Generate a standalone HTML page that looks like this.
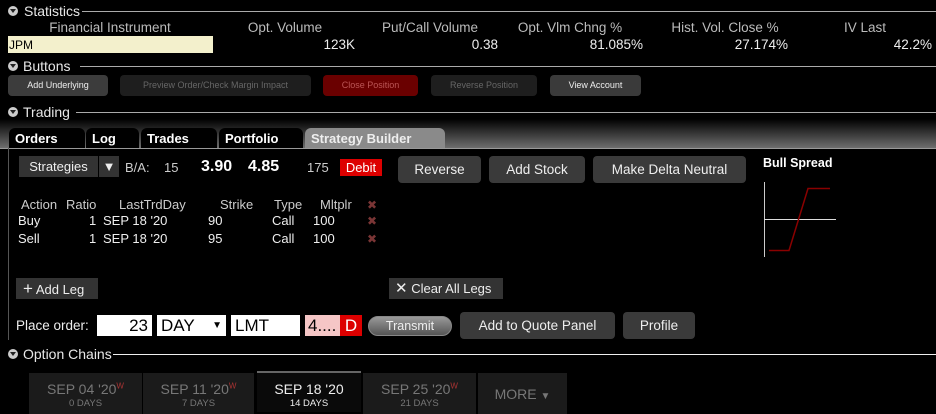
<!DOCTYPE html>
<html><head><meta charset="utf-8"><style>
*{margin:0;padding:0;box-sizing:border-box}
body{width:936px;height:414px;background:#000;color:#ddd;font-family:"Liberation Sans",sans-serif;font-size:13px;position:relative;overflow:hidden}
.a{position:absolute;white-space:nowrap}
.hd{font-size:14px;color:#e8e8e8}
.dot{position:absolute;width:10px;height:10px;border-radius:50%;background:#ccc}
.dot:after{content:"";position:absolute;left:2px;top:3px;border-left:3px solid transparent;border-right:3px solid transparent;border-top:4px solid #222}
.ln{position:absolute;height:1px;background:#aaa}
.col{color:#bbb;font-size:13.5px;text-align:center}
.val{color:#eee;font-size:13.5px;text-align:right}
.b1{position:absolute;height:21px;border-radius:4px;font-size:9px;text-align:center;line-height:21px}
.b2{position:absolute;background:#3a3a3a;border-radius:4px;color:#eee;font-size:13.5px;text-align:center}
.tab{position:absolute;top:128px;height:20px;background:#000;border-radius:6px 6px 0 0;color:#fff;font-weight:bold;font-size:13px;padding:3px 0 0 6px}
.x{color:#7a3535;font-size:12px}
.inp{position:absolute;top:315px;height:21px;background:#fff;color:#000;font-size:17px;line-height:21px}
.et{position:absolute;top:373px;height:41px;background:#1b1b1b;text-align:center;color:#777;font-size:14px;padding-top:8px}
.et small{display:block;font-size:9.5px;margin-top:1px}
.et sup{color:#a33;font-size:8px}
</style></head><body>
<div class="a" style="left:0;right:0;top:119px;height:29px;background:linear-gradient(#000,#6e6e6e)"></div>
<div class="dot" style="left:8px;top:6px"></div><div class="a hd" style="left:24px;top:3px">Statistics</div><div class="ln" style="left:82px;right:0;top:11px"></div>
<div class="a col" style="left:30px;width:160px;top:20px">Financial Instrument</div>
<div class="a col" style="left:230px;width:110px;top:20px">Opt. Volume</div>
<div class="a col" style="left:370px;width:120px;top:20px">Put/Call Volume</div>
<div class="a col" style="left:510px;width:120px;top:20px">Opt. Vlm Chng %</div>
<div class="a col" style="left:660px;width:130px;top:20px">Hist. Vol. Close %</div>
<div class="a col" style="left:830px;width:70px;top:20px">IV Last</div>
<div class="a" style="left:8px;top:36px;width:205px;height:17px;background:#f3f0cc;color:#000;font-size:12px;padding:2px 1px">JPM</div>
<div class="a val" style="right:581px;top:37px">123K</div>
<div class="a val" style="right:438px;top:37px">0.38</div>
<div class="a val" style="right:293px;top:37px">81.085%</div>
<div class="a val" style="right:148px;top:37px">27.174%</div>
<div class="a val" style="right:4px;top:37px">42.2%</div>
<div class="dot" style="left:8px;top:61px"></div><div class="a hd" style="left:23px;top:58px">Buttons</div><div class="ln" style="left:80px;right:0;top:66px"></div>
<div class="b1" style="left:8px;width:100px;top:75px;background:#3c3c3c;color:#eee">Add Underlying</div>
<div class="b1" style="left:120px;width:191px;top:75px;background:#1e1e1e;color:#666">Preview Order/Check Margin Impact</div>
<div class="b1" style="left:323px;width:95px;top:75px;background:#6a0000;color:#b55">Close Position</div>
<div class="b1" style="left:431px;width:106px;top:75px;background:#1e1e1e;color:#666">Reverse Position</div>
<div class="b1" style="left:550px;width:91px;top:75px;background:#3a3a3a;color:#eee">View Account</div>
<div class="dot" style="left:8px;top:107px"></div><div class="a hd" style="left:23px;top:104px">Trading</div><div class="ln" style="left:76px;right:0;top:112px"></div>
<div class="tab" style="left:9px;width:76px">Orders</div>
<div class="tab" style="left:86px;width:53px">Log</div>
<div class="tab" style="left:141px;width:76px">Trades</div>
<div class="tab" style="left:219px;width:84px">Portfolio</div>
<div class="tab" style="left:305px;width:140px;background:#8a8a8a;color:#eee">Strategy Builder</div>
<div class="a" style="left:0;right:0;top:148px;height:1px;background:#999"></div>
<div class="a" style="left:8px;top:148px;width:1px;height:192px;background:#555"></div>
<div class="a" style="left:19px;top:156px;width:79px;height:21px;background:#333;color:#eee;font-size:13px;text-align:center;line-height:21px">Strategies</div>
<div class="a" style="left:99px;top:156px;width:20px;height:21px;background:#333;color:#eee;font-size:13px;text-align:center;line-height:21px">▼</div>
<div class="a" style="left:125px;top:160px;color:#ccc;font-size:13px">B/A:</div>
<div class="a" style="left:164px;top:160px;color:#ccc;font-size:13px">15</div>
<div class="a" style="left:201px;top:158px;color:#fff;font-size:16px;font-weight:bold">3.90</div>
<div class="a" style="left:248px;top:158px;color:#fff;font-size:16px;font-weight:bold">4.85</div>
<div class="a" style="left:307px;top:160px;color:#ccc;font-size:13px">175</div>
<div class="a" style="left:340px;top:159px;width:42px;height:17px;background:#d00;color:#fff;font-size:13px;text-align:center;line-height:17px">Debit</div>
<div class="b2" style="left:398px;width:83px;top:156px;height:27px;line-height:27px">Reverse</div>
<div class="b2" style="left:489px;width:96px;top:156px;height:27px;line-height:27px">Add Stock</div>
<div class="b2" style="left:593px;width:153px;top:156px;height:27px;line-height:27px">Make Delta Neutral</div>
<div class="a" style="left:763px;top:156px;color:#fff;font-weight:bold;font-size:12.5px">Bull Spread</div>
<svg class="a" style="left:0;top:0" width="936" height="414"><line x1="764.5" y1="182" x2="764.5" y2="257" stroke="#ccc"/><line x1="764" y1="219.5" x2="836" y2="219.5" stroke="#ddd"/><polyline points="769,250.5 789,250.5 808,188.5 830,188.5" fill="none" stroke="#8a0000" stroke-width="1.5"/></svg>
<div class="a" style="left:21px;top:197px;color:#ccc">Action</div>
<div class="a" style="left:66px;top:197px;color:#ccc">Ratio</div>
<div class="a" style="left:119px;top:197px;color:#ccc">LastTrdDay</div>
<div class="a" style="left:220px;top:197px;color:#ccc">Strike</div>
<div class="a" style="left:274px;top:197px;color:#ccc">Type</div>
<div class="a" style="left:320px;top:197px;color:#ccc">Mltplr</div>
<div class="a x" style="left:367px;top:198px">✖</div>
<div class="a" style="left:18px;top:213px;color:#eee">Buy</div><div class="a" style="left:89px;top:213px;color:#eee">1</div><div class="a" style="left:103px;top:213px;color:#eee">SEP 18 '20</div><div class="a" style="left:208px;top:213px;color:#eee">90</div><div class="a" style="left:272px;top:213px;color:#eee">Call</div><div class="a" style="left:313px;top:213px;color:#eee">100</div><div class="a x" style="left:367px;top:214px">✖</div>
<div class="a" style="left:18px;top:231px;color:#eee">Sell</div><div class="a" style="left:89px;top:231px;color:#eee">1</div><div class="a" style="left:103px;top:231px;color:#eee">SEP 18 '20</div><div class="a" style="left:208px;top:231px;color:#eee">95</div><div class="a" style="left:272px;top:231px;color:#eee">Call</div><div class="a" style="left:313px;top:231px;color:#eee">100</div><div class="a x" style="left:367px;top:232px">✖</div>
<div class="a" style="left:16px;top:278px;width:82px;height:21px;background:#333;color:#eee;line-height:21px;padding-left:7px"><span style="font-size:17px">+</span> Add Leg</div>
<div class="a" style="left:389px;top:278px;width:114px;height:21px;background:#333;color:#eee;line-height:21px;padding-left:6px"><span style="font-size:15px">✕</span> Clear All Legs</div>
<div class="a" style="left:16px;top:318px;color:#eee;font-size:13.5px">Place order:</div>
<div class="inp" style="left:97px;width:55px;text-align:right;padding-right:4px">23</div>
<div class="inp" style="left:157px;width:69px;padding-left:4px">DAY<span style="position:absolute;right:4px;font-size:10px">▼</span></div>
<div class="inp" style="left:231px;width:69px;padding-left:4px">LMT</div>
<div class="inp" style="left:305px;width:36px;background:#f5c6c6;padding-left:3px">4....</div>
<div class="inp" style="left:340px;width:22px;background:#d00;color:#fff;text-align:center">D</div>
<div class="a" style="left:368px;top:316px;width:84px;height:20px;border-radius:10px;background:linear-gradient(#999,#555);border:1px solid #888;color:#eee;font-size:12.5px;text-align:center;line-height:18px">Transmit</div>
<div class="b2" style="left:460px;width:155px;top:312px;height:27px;line-height:27px">Add to Quote Panel</div>
<div class="b2" style="left:623px;width:72px;top:312px;height:27px;line-height:27px">Profile</div>
<div class="dot" style="left:8px;top:349px"></div><div class="a hd" style="left:23px;top:346px">Option Chains</div><div class="ln" style="left:113px;right:0;top:354px;background:#eee"></div>
<div class="et" style="left:29px;width:113px">SEP 04 '20<sup>W</sup><small>0 DAYS</small></div>
<div class="et" style="left:143px;width:111px">SEP 11 '20<sup>W</sup><small>7 DAYS</small></div>
<div class="et" style="left:257px;width:104px;top:371px;background:#0a0a0a;border-top:2px solid #666;color:#eee">SEP 18 '20<small>14 DAYS</small></div>
<div class="et" style="left:363px;width:113px">SEP 25 '20<sup>W</sup><small>21 DAYS</small></div>
<div class="et" style="left:478px;width:89px;padding-top:13px">MORE <span style="font-size:10px">▼</span></div>
</body></html>
